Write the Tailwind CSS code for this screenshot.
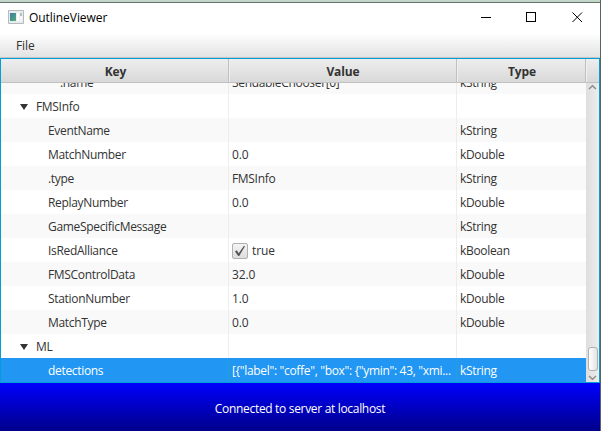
<!DOCTYPE html>
<html lang="en">
<head>
<meta charset="utf-8">
<title>OutlineViewer</title>
<script src="https://cdn.jsdelivr.net/npm/@tailwindcss/browser@4"></script>
</head>
<body class="w-[601px] h-[431px] overflow-hidden bg-white font-['Open_Sans','Noto_Sans',sans-serif] text-[12px] leading-[24px] tracking-[-0.32px] text-[#333333]">
<div class="flex flex-col w-[601px] h-[431px] border-r border-[#59635f]">
  <div class="h-[2px] shrink-0 bg-[#c2d6c9]"></div>
  <div class="h-px shrink-0 bg-[#66736b]"></div>
  <header class="h-[30px] shrink-0 flex items-center bg-white text-black">
    <svg class="ml-2 mt-[-2px] w-4 h-[14px] shrink-0" viewBox="0 0 16 14">
      <defs><linearGradient id="g" x1="0" y1="0" x2="1" y2="1"><stop offset="0" stop-color="#3c79a8"/><stop offset="1" stop-color="#53ad78"/></linearGradient></defs>
      <path d="M.5.5h15v13H.5z" fill="#e9edef" stroke="#b5babd"/>
      <path d="M2 3h6v8H2z" fill="url(#g)"/><path d="M9 3h2v8H9z" fill="#fff"/><path d="M12 3h2v3h-2z" fill="#a8c8ba"/><path d="M12 6h2v5h-2z" fill="#f8f8f8"/>
    </svg>
    <span class="ml-[5px] tracking-[-0.05px]">OutlineViewer</span>
    <svg class="ml-auto mr-[17px] mt-[-2px] w-[102px] h-[10px]" viewBox="0 0 102 10" fill="none" stroke="#000" shape-rendering="crispEdges"><path d="M0 5.500h10M45.500.500h9v9h-9z"/><path shape-rendering="auto" d="M91.500.500l9.500 9.500M101 .500l-9.500 9.500"/></svg>
  </header>
  <nav class="h-[25px] shrink-0 flex items-center pl-4 pt-[2px] tracking-[-0.1px] bg-gradient-to-b from-white to-[#e3e3e3] border-b border-[#c6c6c6]">File</nav>
  <main class="h-[325px] shrink-0 flex flex-col border border-[#039ed3]">
    <div class="h-[24px] shrink-0 flex font-bold text-center tracking-[-0.1px] border-b border-[#c0c0c0] bg-gradient-to-b from-[#eeeeee] to-[#d9d9d9]">
      <div class="w-[228px] border-r border-[#c0c0c0] pl-[2px] leading-[26px]">Key</div>
      <div class="w-[228px] border-r border-[#c0c0c0] border-l border-l-[#f0f0f0] leading-[26px]">Value</div>
      <div class="w-[129px] border-r border-[#c0c0c0] border-l border-l-[#f0f0f0] pl-px leading-[26px]">Type</div>
      <div class="grow border-l border-l-[#f0f0f0]"></div>
    </div>
    <div class="grow min-h-0 flex">
      <div id="rows" class="w-[585px] h-[299px] overflow-hidden flex flex-col justify-end shrink-0"></div>
      <div class="w-[13px] flex flex-col items-center bg-gradient-to-r from-[#dedede] to-[#ededed]">
        <svg class="w-[9px] h-[10px] shrink-0" viewBox="0 0 9 10" fill="none" stroke="#8a8a8a" stroke-width="1.400"><path d="M1 6 4.500 2.700 8 6"/></svg>
        <div class="mt-auto w-[10px] h-[24px] shrink-0 rounded-[3px] border border-[#b0b0b0] bg-gradient-to-r from-white to-[#e2e2e2]"></div>
        <svg class="w-[9px] h-[11px] shrink-0" viewBox="0 0 9 11" fill="none" stroke="#8a8a8a" stroke-width="1.400"><path d="M1 5 4.500 8.200 8 5"/></svg>
      </div>
    </div>
  </main>
  <footer class="h-[48px] shrink-0 flex items-center justify-center pt-[4px] text-white bg-gradient-to-b from-[#0000ff] to-[#00008b]"><span>Connected to server at localhost</span></footer>
</div>
<script>
const rows = [
  [2, '.name', 'SendableChooser[0]', 'kString'],
  [0, 'FMSInfo', '', ''],
  [1, 'EventName', '', 'kString'],
  [1, 'MatchNumber', '0.0', 'kDouble'],
  [1, '.type', 'FMSInfo', 'kString'],
  [1, 'ReplayNumber', '0.0', 'kDouble'],
  [1, 'GameSpecificMessage', '', 'kString'],
  [1, 'IsRedAlliance', 'true', 'kBoolean'],
  [1, 'FMSControlData', '32.0', 'kDouble'],
  [1, 'StationNumber', '1.0', 'kDouble'],
  [1, 'MatchType', '0.0', 'kDouble'],
  [0, 'ML', '', ''],
  [1, 'detections', '[{"label": "coffe", "box": {"ymin": 43, "xmi...', 'kString']
];
const arrow = '<svg class="w-2 h-[6px] mr-2" viewBox="0 0 8 6"><path fill="#333" d="M0 0h8L4 6z"/></svg>';
const check = '<span class="w-4 h-4 mr-1 shrink-0 flex items-center justify-center rounded-[2px] border border-[#b0b0b0] bg-gradient-to-b from-[#f5f5f5] to-[#dddddd]"><svg class="w-[12px] h-[12px]" viewBox="0 0 12 12"><path fill="#555" d="M1 6.500 2.800 5.300 4.700 8.300 10 .800 11 1.300 5.200 11 4.200 11z"/></svg></span>';
const pads = ['pl-[19px]', 'pl-[47px]', 'pl-[59px]'];
document.getElementById('rows').innerHTML = rows.map(([level, key, value, type], i) => {
  const selected = i === rows.length - 1;
  const tone = selected ? 'bg-[#2196f3] text-white' : i % 2 ? 'bg-white' : 'bg-[#f9f9f9]';
  const line = selected ? 'border-[#22a3cf]' : 'border-[#ededed]';
  const spacing = /\d\.0|true/.test(value) ? 'tracking-[-0.1px]' : '';
  return `<div class="h-[24px] shrink-0 flex whitespace-nowrap ${tone}">
    <div class="w-[228px] h-[24px] pt-[2px] shrink-0 flex items-center border-r ${line} ${pads[level]}">${level ? '' : arrow}<span>${key}</span></div>
    <div class="w-[228px] h-[24px] pt-[2px] shrink-0 flex items-center border-r ${line} pl-[3px] ${spacing}">${value === 'true' ? check : ''}<span>${value}</span></div>
    <div class="w-[129px] h-[24px] pt-[2px] shrink-0 flex items-center pl-[3px]"><span>${type}</span></div>
  </div>`;
}).join('');
</script>
</body>
</html>
